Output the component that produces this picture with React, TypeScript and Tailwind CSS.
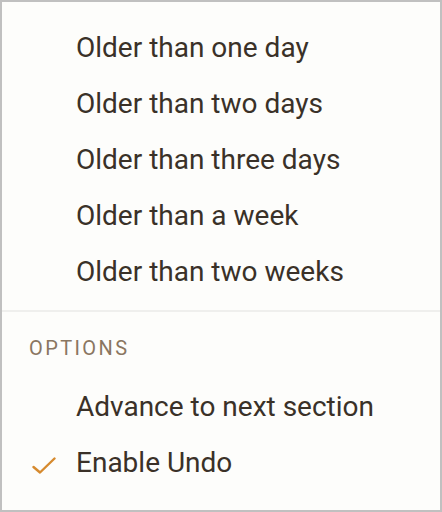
const ranges = [
  "Older than one day",
  "Older than two days",
  "Older than three days",
  "Older than a week",
  "Older than two weeks",
];

function CheckIcon() {
  return (
    <svg width="24" height="18" viewBox="0 0 24 18" fill="none" className="mt-[3px]">
      <path d="M1.5 11l6.5 5.5L22.5 2.5" stroke="#d68a2e" strokeWidth="2.4" strokeLinecap="round" strokeLinejoin="round" />
    </svg>
  );
}

function MenuRow({ label, checked = false }: { label: string; checked?: boolean }) {
  return (
    <div className="flex h-[56px] items-center">
      <div className="flex w-[74px] shrink-0 items-center pl-[30px]">{checked && <CheckIcon />}</div>
      <span className="text-[28px] leading-none text-[#3a3128]">{label}</span>
    </div>
  );
}

export default function App() {
  return (
    <div
      className="h-[512px] w-[442px] border-2 border-[#c0c0c0] bg-[#fdfdfb]"
      style={{ fontFamily: "Roboto, 'Noto Sans', sans-serif" }}
    >
      <div className="pt-[18px] pb-[10px]">
        {ranges.map((r) => (
          <MenuRow key={r} label={r} />
        ))}
      </div>
      <div className="h-[2px] bg-[#efefed]" />
      <div className="pt-[24px] pb-[19px] pl-[27px] text-[20px] leading-[24px] tracking-[2.4px] text-[#8a7661]">
        OPTIONS
      </div>
      <MenuRow label="Advance to next section" />
      <MenuRow label="Enable Undo" checked />
    </div>
  );
}
